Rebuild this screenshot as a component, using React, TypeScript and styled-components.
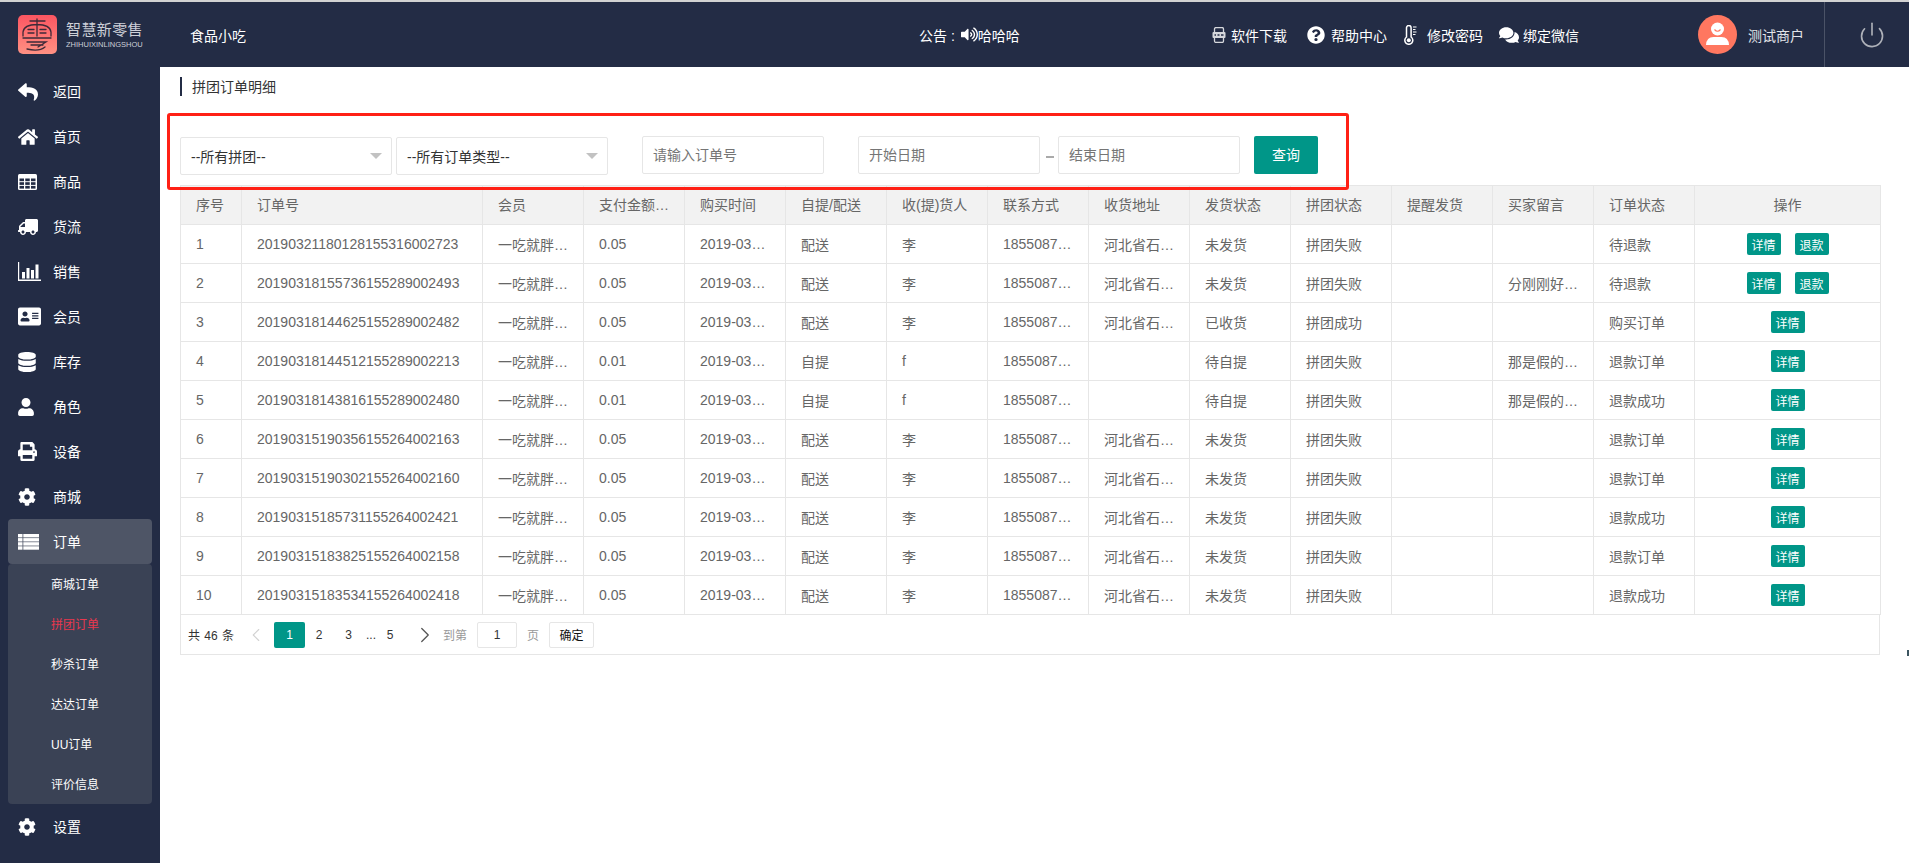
import React from "react"
import styled, { createGlobalStyle } from "styled-components"
import {
  FaReply,
  FaHome,
  FaTruck,
  FaAddressCard,
  FaDatabase,
  FaUser,
  FaPrint,
  FaCog,
  FaQuestionCircle,
  FaComments,
  FaVolumeUp,
} from "react-icons/fa"
import { Power, ChevronLeft, ChevronRight } from "lucide-react"

const NAVY = "#232c45"
const TEAL = "#009688"
const LINE = "#e6e6e6"

const GlobalStyle = createGlobalStyle`
  html, body {
    margin: 0;
    padding: 0;
    width: 1909px;
    height: 863px;
    overflow: hidden;
    background: #fff;
  }
  body, input, button {
    font-family: "Liberation Sans", "Noto Sans CJK SC", sans-serif;
  }
  * { box-sizing: border-box; }
`

const Shell = styled.div`
  width: 1909px;
  height: 863px;
  border-top: 2px solid #d2d2d2;
  display: flex;
  flex-direction: column;
  position: relative;
  overflow: hidden;
`

const Header = styled.header`
  height: 65px;
  flex: none;
  background: ${NAVY};
  color: #fff;
  display: flex;
  align-items: center;
  font-size: 14px;
`

const Brand = styled.div`
  width: 190px;
  padding-left: 18px;
  display: flex;
  align-items: center;
  gap: 9px;
`

const BrandText = styled.div`
  width: 78px;
  color: #cdd0d8;
`

const BrandName = styled.div`
  font-size: 15px;
  line-height: 18px;
  letter-spacing: 0.4px;
  white-space: nowrap;
`

const BrandPinyin = styled.div`
  font-size: 7.5px;
  line-height: 9px;
  margin-top: 1px;
  white-space: nowrap;
`

const ShopName = styled.div`
  width: 56px;
  white-space: nowrap;
`

const Notice = styled.div`
  margin-left: 673px;
  width: 100px;
  display: flex;
  align-items: center;
  white-space: nowrap;
  font-size: 14px;
`

const NoticeSpeaker = styled.span`
  display: flex;
  margin: 0 0 0 6px;
`

const Tools = styled.div`
  margin-left: 193px;
  width: 370px;
  display: flex;
  align-items: center;
`

const Tool = styled.div<{ $width: number }>`
  width: ${(p) => p.$width}px;
  display: flex;
  align-items: center;
  white-space: nowrap;
`

const ToolIcon = styled.span<{ $width: number }>`
  width: ${(p) => p.$width}px;
  flex: none;
  display: flex;
  align-items: center;
`

const UserBox = styled.div`
  margin-left: 116px;
  width: 126px;
  height: 100%;
  display: flex;
  align-items: center;
  gap: 11px;
  color: #e2e4e9;
`

const PowerBox = styled.div`
  flex: 1;
  height: 100%;
  border-left: 1px solid #4b5367;
  display: flex;
  align-items: center;
  padding-left: 33px;
  color: #aeb1b9;
`

const Body = styled.div`
  flex: 1;
  display: flex;
  min-height: 0;
`

const Sidebar = styled.nav`
  width: 160px;
  flex: none;
  background: ${NAVY};
  padding-top: 2px;
`

const NavItem = styled.div<{ $active?: boolean }>`
  height: 45px;
  margin: 0 8px;
  padding-left: 10px;
  display: flex;
  align-items: center;
  color: #fff;
  font-size: 14px;
  border-radius: 4px;
  background: ${(p) => (p.$active ? "#4e5566" : "transparent")};
`

const NavIcon = styled.span<{ $flip?: boolean; $nudge?: number }>`
  width: 35px;
  flex: none;
  display: flex;
  align-items: center;
  & > svg {
    margin-left: ${(p) => p.$nudge ?? 0}px;
    transform: ${(p) => (p.$flip ? "scaleX(-1)" : "none")};
  }
`

const NavLabel = styled.span`
  margin-bottom: 2px;
`

const SubMenu = styled.div`
  margin: 0 8px;
  background: #3a4255;
  border-radius: 4px;
`

const SubItem = styled.div<{ $active?: boolean }>`
  height: 40px;
  padding: 0 0 2px 43px;
  display: flex;
  align-items: center;
  font-size: 12px;
  color: ${(p) => (p.$active ? "#e8384f" : "#fff")};
`

const Content = styled.main`
  flex: 1;
  position: relative;
  padding: 10px 29px 0 20px;
  min-width: 0;
`

const Title = styled.div`
  height: 19px;
  border-left: 2px solid ${NAVY};
  padding: 0 0 2px 10px;
  display: flex;
  align-items: center;
  font-size: 14px;
  color: #333;
`

const Filters = styled.div`
  margin-top: 40px;
  height: 39px;
  display: flex;
  align-items: flex-start;
`

const Select = styled.div<{ $gap?: number }>`
  width: 212px;
  height: 38px;
  margin-top: 1px;
  margin-left: ${(p) => p.$gap ?? 0}px;
  padding: 0 10px;
  border: 1px solid ${LINE};
  border-radius: 2px;
  display: flex;
  align-items: center;
  justify-content: space-between;
  font-size: 14px;
  color: #333;
  background: #fff;
`

const Caret = styled.i`
  width: 0;
  height: 0;
  margin: 0 -1px 0 0;
  border-style: solid;
  border-width: 6px 6px 0 6px;
  border-color: #c2c2c2 transparent transparent transparent;
`

const Field = styled.input<{ $width: number; $gap: number }>`
  width: ${(p) => p.$width}px;
  height: 38px;
  margin-left: ${(p) => p.$gap}px;
  padding: 0 10px;
  border: 1px solid ${LINE};
  border-radius: 2px;
  font-size: 14px;
  color: #666;
  outline: none;
  &::placeholder {
    color: #757575;
    opacity: 1;
  }
`

const Dash = styled.span`
  width: 8px;
  height: 2px;
  margin: 20px 4px 0 6px;
  background: #aaa;
`

const QueryButton = styled.button`
  width: 64px;
  height: 38px;
  margin-left: 14px;
  border: 0;
  border-radius: 2px;
  background: ${TEAL};
  color: #fff;
  font-size: 14px;
  padding: 0 0 2px;
`

const Table = styled.table`
  width: 1700px;
  margin-top: 10px;
  table-layout: fixed;
  border-collapse: collapse;
  font-size: 14px;
  color: #666;
`

const Th = styled.th<{ $center?: boolean }>`
  height: 39px;
  padding: 0 15px 2px;
  border: 1px solid ${LINE};
  background: #f2f2f2;
  font-weight: 400;
  text-align: ${(p) => (p.$center ? "center" : "left")};
  white-space: nowrap;
  overflow: hidden;
  text-overflow: ellipsis;
`

const Td = styled.td<{ $center?: boolean }>`
  height: 39px;
  padding: 0 15px;
  border: 1px solid ${LINE};
  text-align: ${(p) => (p.$center ? "center" : "left")};
  white-space: nowrap;
  overflow: hidden;
  text-overflow: ellipsis;
`

const MiniButton = styled.button`
  width: 34px;
  height: 22px;
  border: 0;
  border-radius: 2px;
  background: ${TEAL};
  color: #fff;
  font-size: 12px;
  padding: 0;
  margin: 0 7px;
  vertical-align: middle;
`

const Pager = styled.div`
  width: 1700px;
  height: 40px;
  border: 1px solid ${LINE};
  border-top: 0;
  display: flex;
  align-items: center;
  padding-left: 7px;
  font-size: 12px;
  color: #333;
`

const PagerTotal = styled.span`
  width: 57px;
  white-space: pre;
  word-spacing: 1px;
`

const PageArrow = styled.span<{ $muted?: boolean; $width: number; $padL?: number; $padR?: number }>`
  width: ${(p) => p.$width}px;
  padding: 0 ${(p) => p.$padR ?? 0}px 0 ${(p) => p.$padL ?? 0}px;
  flex: none;
  display: flex;
  justify-content: center;
  color: ${(p) => (p.$muted ? "#d2d2d2" : "#555")};
`

const PageNum = styled.span<{ $active?: boolean; $width: number }>`
  width: ${(p) => p.$width}px;
  height: 26px;
  flex: none;
  display: flex;
  align-items: center;
  justify-content: center;
  border-radius: 2px;
  background: ${(p) => (p.$active ? TEAL : "transparent")};
  color: ${(p) => (p.$active ? "#fff" : "#333")};
`

const PagerHint = styled.span<{ $width: number; $pad?: number }>`
  width: ${(p) => p.$width}px;
  padding-left: ${(p) => p.$pad ?? 0}px;
  color: #999;
  flex: none;
`

const PageInput = styled.div`
  width: 40px;
  height: 26px;
  flex: none;
  border: 1px solid ${LINE};
  border-radius: 2px;
  display: flex;
  align-items: center;
  justify-content: center;
`

const PageGo = styled.button`
  width: 45px;
  height: 26px;
  flex: none;
  border: 1px solid ${LINE};
  border-radius: 2px;
  background: #fff;
  font-size: 12px;
  color: #111;
  padding: 0;
`

const RedMark = styled.div`
  position: absolute;
  left: 7px;
  top: 46px;
  width: 1182px;
  height: 77px;
  border: 3px solid #ff2015;
  border-radius: 3px;
  pointer-events: none;
`

const EdgeDot = styled.i`
  position: absolute;
  right: 0;
  top: 648px;
  width: 2px;
  height: 6px;
  background: #3d5661;
`

const Logo = () => (
  <svg width="39" height="39" viewBox="0 0 39 39" fill="none">
    <defs>
      <linearGradient id="logoFill" x1="0" y1="0" x2="0" y2="1">
        <stop offset="0" stopColor="#fb5561" />
        <stop offset="1" stopColor="#ff9183" />
      </linearGradient>
    </defs>
    <rect width="39" height="39" rx="5" fill="url(#logoFill)" />
    <g stroke="#3d2a38" strokeWidth="1.3" strokeLinecap="round">
      <path d="M12 6H27M19 4V21M5 21V17Q6 9.5 19 9.5Q32 9.5 33 17V21" />
      <path d="M10 14.5H16M22 14.5H28M10 18H16M22 18H28M5 23H33M9 27H28L20 32M13 30H25" />
      <path d="M9 34Q21 37 27 32" />
    </g>
  </svg>
)

const TableIcon = () => (
  <svg width="19" height="16" viewBox="0 0 19 16">
    <rect width="19" height="16" rx="1.5" fill="#fff" />
    <g fill={NAVY}>
      {[1.5, 7.25, 13].map((x) =>
        [4.5, 8.2, 11.9].map((y) => <rect key={`${x}-${y}`} x={x} y={y} width="4.5" height="2.7" />),
      )}
    </g>
  </svg>
)

const ChartIcon = () => (
  <svg width="23" height="19" viewBox="0 0 23 19" fill="#fff">
    <path d="M0 0H1.2V17.6H23V19H0Z" />
    <rect x="4" y="10" width="3" height="6.5" />
    <rect x="8.5" y="6" width="3" height="10.5" />
    <rect x="13" y="8" width="3" height="8.5" />
    <rect x="17.5" y="2.5" width="3" height="14" />
  </svg>
)

const ListIcon = () => (
  <svg width="21" height="16" viewBox="0 0 21 16" fill="#fff">
    {[0, 4.1, 8.2, 12.3].map((y) => (
      <g key={y}>
        <rect x="0" y={y} width="4.5" height="3.4" />
        <rect x="5.3" y={y} width="15.7" height="3.4" />
      </g>
    ))}
  </svg>
)

const AppIcon = () => (
  <svg width="14" height="16" viewBox="0 0 14 16" fill="none">
    <rect x="2.5" y="0.5" width="9" height="15" rx="1.5" stroke="#d5d7dc" strokeWidth="1.3" />
    <rect x="0.5" y="5" width="13" height="6" rx="1" fill="#d5d7dc" />
    <path d="M2.5 8H4M5.5 8H7.5M9 8H11.5" stroke="#232c45" strokeWidth="1.4" />
  </svg>
)

const ThermoIcon = () => (
  <svg width="13" height="20" viewBox="0 0 13 20" fill="none" stroke="#fff">
    <path
      d="M2.5 12V2.8a2.3 2.3 0 0 1 4.6 0V12a4 4 0 1 1-4.6 0Z"
      strokeWidth="1.5"
    />
    <circle cx="4.8" cy="15.3" r="2" fill="#fff" stroke="none" />
    <path d="M9 2H12.5M9 4.5H11.5M9 7H12.5M9 9.5H11.5" strokeWidth="1.1" />
  </svg>
)

const Avatar = () => (
  <svg width="39" height="39" viewBox="0 0 39 39">
    <circle cx="19.5" cy="19.5" r="19.5" fill="#ff7760" />
    <circle cx="19.5" cy="14" r="6.5" fill="#fff" />
    <path d="M16.5 14.5Q19.5 18 22.5 14.5" stroke="#ff7760" strokeWidth="1.2" fill="none" />
    <path d="M8 30Q8.5 22 15.5 22H23.5Q30.5 22 31 30Z" fill="#fff" />
  </svg>
)

const navTop = [
  { label: "返回", icon: <FaReply size={20} /> },
  { label: "首页", icon: <FaHome size={20} /> },
  { label: "商品", icon: <TableIcon /> },
  { label: "货流", icon: <FaTruck size={20} />, flip: true },
  { label: "销售", icon: <ChartIcon /> },
  { label: "会员", icon: <FaAddressCard size={23} /> },
  { label: "库存", icon: <FaDatabase size={20} />, nudge: -1 },
  { label: "角色", icon: <FaUser size={18} />, nudge: -1 },
  { label: "设备", icon: <FaPrint size={19} /> },
  { label: "商城", icon: <FaCog size={18} /> },
]

const subItems = ["商城订单", "拼团订单", "秒杀订单", "达达订单", "UU订单", "评价信息"]

const columns = [
  { title: "序号", width: 61 },
  { title: "订单号", width: 241 },
  { title: "会员", width: 101 },
  { title: "支付金额(元)", width: 101 },
  { title: "购买时间", width: 101 },
  { title: "自提/配送", width: 101 },
  { title: "收(提)货人", width: 101 },
  { title: "联系方式", width: 101 },
  { title: "收货地址", width: 101 },
  { title: "发货状态", width: 101 },
  { title: "拼团状态", width: 101 },
  { title: "提醒发货", width: 101 },
  { title: "买家留言", width: 101 },
  { title: "订单状态", width: 101 },
  { title: "操作", width: 186, center: true },
]

const addr = "河北省石家庄市长安区"
const rows = [
  ["20190321180128155316002723", "0.05", "2019-03-21 18:01:28", "配送", "李", addr, "未发货", "拼团失败", "", "待退款", true],
  ["20190318155736155289002493", "0.05", "2019-03-18 15:57:36", "配送", "李", addr, "未发货", "拼团失败", "分刚刚好的留言", "待退款", true],
  ["20190318144625155289002482", "0.05", "2019-03-18 14:46:25", "配送", "李", addr, "已收货", "拼团成功", "", "购买订单", false],
  ["20190318144512155289002213", "0.01", "2019-03-18 14:45:12", "自提", "f", "", "待自提", "拼团失败", "那是假的留言", "退款订单", false],
  ["20190318143816155289002480", "0.01", "2019-03-18 14:38:16", "自提", "f", "", "待自提", "拼团失败", "那是假的留言", "退款成功", false],
  ["20190315190356155264002163", "0.05", "2019-03-15 19:03:56", "配送", "李", addr, "未发货", "拼团失败", "", "退款订单", false],
  ["20190315190302155264002160", "0.05", "2019-03-15 19:03:02", "配送", "李", addr, "未发货", "拼团失败", "", "退款订单", false],
  ["20190315185731155264002421", "0.05", "2019-03-15 18:57:31", "配送", "李", addr, "未发货", "拼团失败", "", "退款成功", false],
  ["20190315183825155264002158", "0.05", "2019-03-15 18:38:25", "配送", "李", addr, "未发货", "拼团失败", "", "退款订单", false],
  ["20190315183534155264002418", "0.05", "2019-03-15 18:35:34", "配送", "李", addr, "未发货", "拼团失败", "", "退款成功", false],
] as const

const App = () => {
  return (
    <Shell>
      <GlobalStyle />
      <Header>
        <Brand>
          <Logo />
          <BrandText>
            <BrandName>智慧新零售</BrandName>
            <BrandPinyin>ZHIHUIXINLINGSHOU</BrandPinyin>
          </BrandText>
        </Brand>
        <ShopName>食品小吃</ShopName>
        <Notice>
          公告 :
          <NoticeSpeaker>
            <FaVolumeUp size={17} />
          </NoticeSpeaker>
          哈哈哈
        </Notice>
        <Tools>
          <Tool $width={95}>
            <ToolIcon $width={19}>
              <AppIcon />
            </ToolIcon>
            软件下载
          </Tool>
          <Tool $width={97}>
            <ToolIcon $width={24}>
              <FaQuestionCircle size={18} />
            </ToolIcon>
            帮助中心
          </Tool>
          <Tool $width={95}>
            <ToolIcon $width={23}>
              <ThermoIcon />
            </ToolIcon>
            修改密码
          </Tool>
          <Tool $width={80}>
            <ToolIcon $width={24}>
              <FaComments size={20} />
            </ToolIcon>
            绑定微信
          </Tool>
        </Tools>
        <UserBox>
          <Avatar />
          测试商户
        </UserBox>
        <PowerBox>
          <Power size={28} strokeWidth={1.4} />
        </PowerBox>
      </Header>
      <Body>
        <Sidebar>
          {navTop.map(({ label, icon, flip, nudge }) => (
            <NavItem key={label}>
              <NavIcon $flip={flip} $nudge={nudge}>
                {icon}
              </NavIcon>
              <NavLabel>{label}</NavLabel>
            </NavItem>
          ))}
          <NavItem $active>
            <NavIcon>
              <ListIcon />
            </NavIcon>
            <NavLabel>订单</NavLabel>
          </NavItem>
          <SubMenu>
            {subItems.map((s) => (
              <SubItem key={s} $active={s === "拼团订单"}>
                {s}
              </SubItem>
            ))}
          </SubMenu>
          <NavItem>
            <NavIcon>
              <FaCog size={18} />
            </NavIcon>
            <NavLabel>设置</NavLabel>
          </NavItem>
        </Sidebar>
        <Content>
          <Title>拼团订单明细</Title>
          <Filters>
            <Select>
              --所有拼团--
              <Caret />
            </Select>
            <Select $gap={4}>
              --所有订单类型--
              <Caret />
            </Select>
            <Field $width={182} $gap={34} placeholder="请输入订单号" />
            <Field $width={182} $gap={34} placeholder="开始日期" />
            <Dash />
            <Field $width={182} $gap={0} placeholder="结束日期" />
            <QueryButton>查询</QueryButton>
          </Filters>
          <RedMark />
          <Table>
            <colgroup>
              {columns.map((c) => (
                <col key={c.title} width={c.width} />
              ))}
            </colgroup>
            <thead>
              <tr>
                {columns.map((c) => (
                  <Th key={c.title} $center={c.center}>
                    {c.title}
                  </Th>
                ))}
              </tr>
            </thead>
            <tbody>
              {rows.map((r, i) => (
                <tr key={r[0]}>
                  <Td>{i + 1}</Td>
                  <Td>{r[0]}</Td>
                  <Td>一吃就胖的小仙女</Td>
                  <Td>{r[1]}</Td>
                  <Td>{r[2]}</Td>
                  <Td>{r[3]}</Td>
                  <Td>{r[4]}</Td>
                  <Td>18550871234</Td>
                  <Td>{r[5]}</Td>
                  <Td>{r[6]}</Td>
                  <Td>{r[7]}</Td>
                  <Td></Td>
                  <Td>{r[8]}</Td>
                  <Td>{r[9]}</Td>
                  <Td $center>
                    <MiniButton>详情</MiniButton>
                    {r[10] && <MiniButton>退款</MiniButton>}
                  </Td>
                </tr>
              ))}
            </tbody>
          </Table>
          <Pager>
            <PagerTotal>共 46 条</PagerTotal>
            <PageArrow $muted $width={29} $padR={7}>
              <ChevronLeft size={26} strokeWidth={1.2} />
            </PageArrow>
            <PageNum $active $width={31}>
              1
            </PageNum>
            <PageNum $width={28}>2</PageNum>
            <PageNum $width={31}>3</PageNum>
            <PageNum $width={14}>...</PageNum>
            <PageNum $width={24}>5</PageNum>
            <PageArrow $width={41} $padL={4}>
              <ChevronRight size={26} strokeWidth={1.2} />
            </PageArrow>
            <PagerHint $width={34}>到第</PagerHint>
            <PageInput>1</PageInput>
            <PagerHint $width={32} $pad={10}>
              页
            </PagerHint>
            <PageGo>确定</PageGo>
          </Pager>
        </Content>
      </Body>
      <EdgeDot />
    </Shell>
  )
}

export default App
